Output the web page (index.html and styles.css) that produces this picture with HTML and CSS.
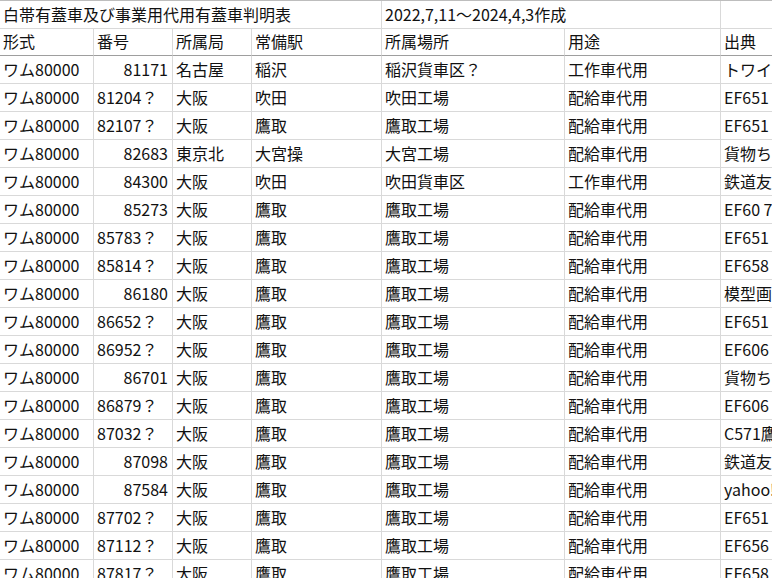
FILE: index.html
```html
<!DOCTYPE html>
<html lang="ja">
<head>
<meta charset="utf-8">
<title>白帯有蓋車及び事業用代用有蓋車判明表</title>
<link rel="stylesheet" href="styles.css">
</head>
<body>
<div class="sheet">
  <div class="c title span4">白帯有蓋車及び事業用代用有蓋車判明表</div>
  <div class="c title span2">2022,7,11～2024,4,3作成</div>
  <div class="c title"></div>

  <div class="c hd">形式</div><div class="c hd">番号</div><div class="c hd">所属局</div><div class="c hd">常備駅</div><div class="c hd">所属場所</div><div class="c hd">用途</div><div class="c hd">出典</div>

  <div class="c">ワム80000</div><div class="c r">81171</div><div class="c">名古屋</div><div class="c">稲沢</div><div class="c">稲沢貨車区？</div><div class="c">工作車代用</div><div class="c">トワイライト</div>
  <div class="c">ワム80000</div><div class="c">81204？</div><div class="c">大阪</div><div class="c">吹田</div><div class="c">吹田工場</div><div class="c">配給車代用</div><div class="c">EF651</div>
  <div class="c">ワム80000</div><div class="c">82107？</div><div class="c">大阪</div><div class="c">鷹取</div><div class="c">鷹取工場</div><div class="c">配給車代用</div><div class="c">EF651</div>
  <div class="c">ワム80000</div><div class="c r">82683</div><div class="c">東京北</div><div class="c">大宮操</div><div class="c">大宮工場</div><div class="c">配給車代用</div><div class="c">貨物ちゃんねる</div>
  <div class="c">ワム80000</div><div class="c r">84300</div><div class="c">大阪</div><div class="c">吹田</div><div class="c">吹田貨車区</div><div class="c">工作車代用</div><div class="c">鉄道友の会</div>
  <div class="c">ワム80000</div><div class="c r">85273</div><div class="c">大阪</div><div class="c">鷹取</div><div class="c">鷹取工場</div><div class="c">配給車代用</div><div class="c">EF60 7</div>
  <div class="c">ワム80000</div><div class="c">85783？</div><div class="c">大阪</div><div class="c">鷹取</div><div class="c">鷹取工場</div><div class="c">配給車代用</div><div class="c">EF651</div>
  <div class="c">ワム80000</div><div class="c">85814？</div><div class="c">大阪</div><div class="c">鷹取</div><div class="c">鷹取工場</div><div class="c">配給車代用</div><div class="c">EF658</div>
  <div class="c">ワム80000</div><div class="c r">86180</div><div class="c">大阪</div><div class="c">鷹取</div><div class="c">鷹取工場</div><div class="c">配給車代用</div><div class="c">模型画像</div>
  <div class="c">ワム80000</div><div class="c">86652？</div><div class="c">大阪</div><div class="c">鷹取</div><div class="c">鷹取工場</div><div class="c">配給車代用</div><div class="c">EF651</div>
  <div class="c">ワム80000</div><div class="c">86952？</div><div class="c">大阪</div><div class="c">鷹取</div><div class="c">鷹取工場</div><div class="c">配給車代用</div><div class="c">EF606</div>
  <div class="c">ワム80000</div><div class="c r">86701</div><div class="c">大阪</div><div class="c">鷹取</div><div class="c">鷹取工場</div><div class="c">配給車代用</div><div class="c">貨物ちゃんねる</div>
  <div class="c">ワム80000</div><div class="c">86879？</div><div class="c">大阪</div><div class="c">鷹取</div><div class="c">鷹取工場</div><div class="c">配給車代用</div><div class="c">EF606</div>
  <div class="c">ワム80000</div><div class="c">87032？</div><div class="c">大阪</div><div class="c">鷹取</div><div class="c">鷹取工場</div><div class="c">配給車代用</div><div class="c">C571鷹取</div>
  <div class="c">ワム80000</div><div class="c r">87098</div><div class="c">大阪</div><div class="c">鷹取</div><div class="c">鷹取工場</div><div class="c">配給車代用</div><div class="c">鉄道友の会</div>
  <div class="c">ワム80000</div><div class="c r">87584</div><div class="c">大阪</div><div class="c">鷹取</div><div class="c">鷹取工場</div><div class="c">配給車代用</div><div class="c">yahoo!</div>
  <div class="c">ワム80000</div><div class="c">87702？</div><div class="c">大阪</div><div class="c">鷹取</div><div class="c">鷹取工場</div><div class="c">配給車代用</div><div class="c">EF651</div>
  <div class="c">ワム80000</div><div class="c">87112？</div><div class="c">大阪</div><div class="c">鷹取</div><div class="c">鷹取工場</div><div class="c">配給車代用</div><div class="c">EF656</div>
  <div class="c">ワム80000</div><div class="c">87817？</div><div class="c">大阪</div><div class="c">鷹取</div><div class="c">鷹取工場</div><div class="c">配給車代用</div><div class="c">EF658</div>
</div>
</body>
</html>
```

FILE: styles.css
```css
html, body {
  margin: 0;
  padding: 0;
  background: #fff;
  overflow: hidden;
}
body {
  width: 772px;
  height: 578px;
}
.sheet {
  display: grid;
  grid-template-columns: 94px 79px 79px 130px 183px 156px 300px;
  grid-template-rows: 28px 27px;
  grid-auto-rows: 28px;
  width: 1021px;
  border-top: 1px solid #bdbdbd;
  font-family: "Noto Sans CJK JP", "Noto Sans", sans-serif;
  font-size: 16px;
  color: #111;
}
.c {
  box-sizing: border-box;
  border-right: 1px solid #d9d9d9;
  border-bottom: 1px solid #d9d9d9;
  padding: 0 4px 2px 3px;
  display: flex;
  align-items: center;
  white-space: nowrap;
  overflow: hidden;
  line-height: 1;
}
.r {
  justify-content: flex-end;
}
.span4 {
  grid-column: span 4;
}
.span2 {
  grid-column: span 2;
}
.hd {
  border-bottom-color: #9e9e9e;
}
```
